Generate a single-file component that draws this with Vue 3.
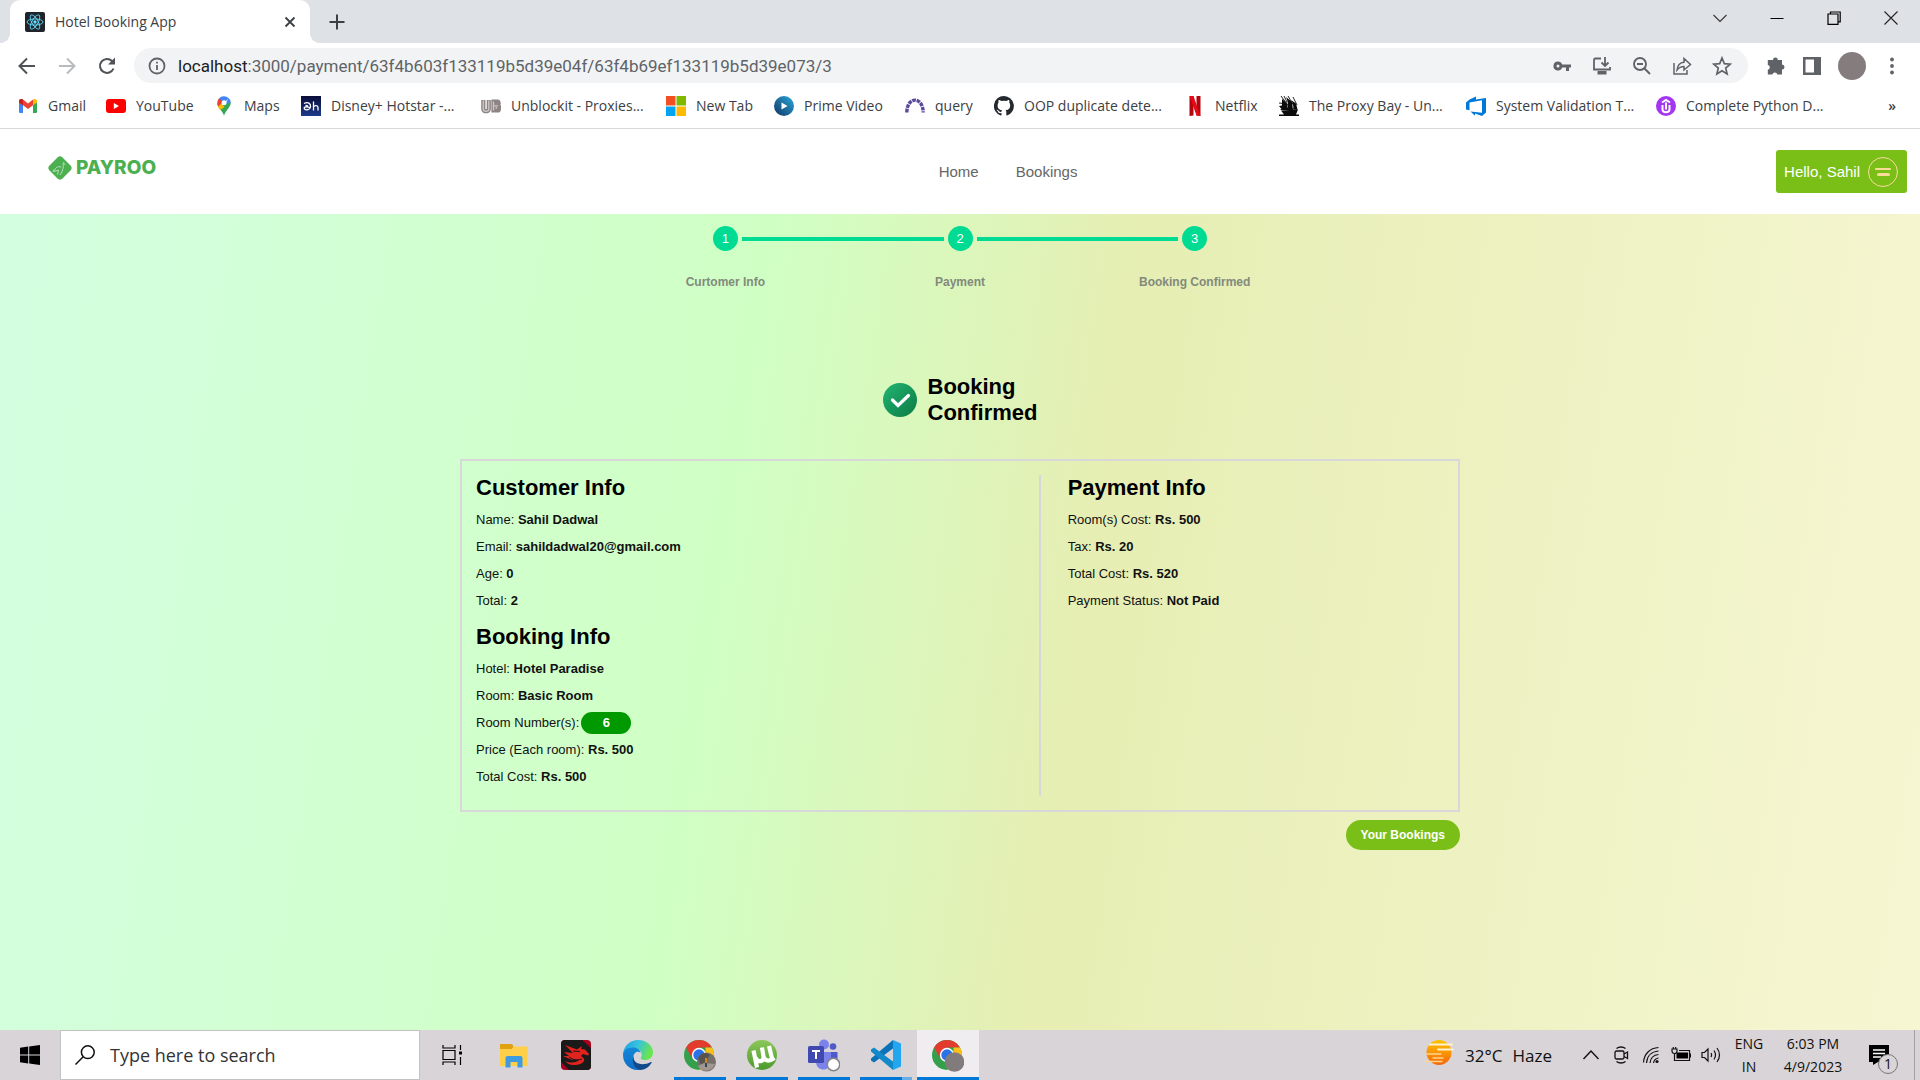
<script setup>
const bookmarks = [
  { icon: 'gmail', label: 'Gmail' },
  { icon: 'youtube', label: 'YouTube' },
  { icon: 'maps', label: 'Maps' },
  { icon: 'hotstar', label: 'Disney+ Hotstar -...' },
  { icon: 'unblockit', label: 'Unblockit - Proxies...' },
  { icon: 'microsoft', label: 'New Tab' },
  { icon: 'prime', label: 'Prime Video' },
  { icon: 'query', label: 'query' },
  { icon: 'github', label: 'OOP duplicate dete...' },
  { icon: 'netflix', label: 'Netflix' },
  { icon: 'ship', label: 'The Proxy Bay - Un...' },
  { icon: 'azure', label: 'System Validation T...' },
  { icon: 'udemy', label: 'Complete Python D...' },
]

const steps = ['Curtomer Info', 'Payment', 'Booking Confirmed']

const customer = [
  { label: 'Name', value: 'Sahil Dadwal' },
  { label: 'Email', value: 'sahildadwal20@gmail.com' },
  { label: 'Age', value: '0' },
  { label: 'Total', value: '2' },
]

const booking = [
  { label: 'Hotel', value: 'Hotel Paradise' },
  { label: 'Room', value: 'Basic Room' },
  { label: 'Room Number(s)', value: '6', pill: true },
  { label: 'Price (Each room)', value: 'Rs. 500' },
  { label: 'Total Cost', value: 'Rs. 500' },
]

const payment = [
  { label: 'Room(s) Cost', value: 'Rs. 500' },
  { label: 'Tax', value: 'Rs. 20' },
  { label: 'Total Cost', value: 'Rs. 520' },
  { label: 'Payment Status', value: 'Not Paid' },
]
</script>

<template>
  <div class="screen">
    <header class="browser">
      <div class="tabs">
        <div class="tab">
          <svg class="favicon" viewBox="0 0 20 20" width="20" height="20">
            <rect width="20" height="20" rx="2" fill="#20232a" />
            <g fill="none" stroke="#61dafb" stroke-width="0.9">
              <ellipse cx="10" cy="10" rx="8" ry="3.1" />
              <ellipse cx="10" cy="10" rx="8" ry="3.1" transform="rotate(60 10 10)" />
              <ellipse cx="10" cy="10" rx="8" ry="3.1" transform="rotate(120 10 10)" />
            </g>
            <circle cx="10" cy="10" r="1.7" fill="#61dafb" />
          </svg>
          <span class="tab-title">Hotel Booking App</span>
          <button class="plain" aria-label="Close tab">
            <svg viewBox="0 0 12 12" width="12" height="12" stroke="#3c4043" stroke-width="1.8"><path d="M1.5 1.5l9 9M10.5 1.5l-9 9" /></svg>
          </button>
        </div>
        <button class="plain new-tab" aria-label="New tab">
          <svg viewBox="0 0 16 16" width="16" height="16" stroke="#3c4043" stroke-width="2"><path d="M8 0.5v15M0.5 8h15" /></svg>
        </button>
        <div class="window-controls">
          <button class="plain" aria-label="Search tabs"><svg viewBox="0 0 14 14" width="14" height="14" fill="none" stroke="#333" stroke-width="1.1"><path d="M0.5 4L7 10.5L13.500 4" /></svg></button>
          <button class="plain" aria-label="Minimize"><svg viewBox="0 0 14 14" width="14" height="14" stroke="#000"><path d="M0.5 7.500h13" /></svg></button>
          <button class="plain" aria-label="Restore"><svg viewBox="0 0 14 14" width="14" height="14" fill="none" stroke="#000" stroke-width="1.2"><path d="M1 3h10v10.300h-10zM3.500 3V1h9.700v9.800h-2" /></svg></button>
          <button class="plain" aria-label="Close"><svg viewBox="0 0 14 14" width="14" height="14" stroke="#222" stroke-width="1.1"><path d="M0.5 0.5l13 13M13.500 0.5l-13 13" /></svg></button>
        </div>
      </div>

      <div class="toolbar">
        <div class="history">
          <button class="plain" aria-label="Back"><svg viewBox="0 0 18 18" width="18" height="18" fill="none" stroke="#4f5357" stroke-width="2"><path d="M17 9H2M9 1.500L1.500 9L9 16.500" /></svg></button>
          <button class="plain" aria-label="Forward"><svg viewBox="0 0 18 18" width="18" height="18" fill="none" stroke="#b9bbbe" stroke-width="2"><path d="M1 9h15M9 1.500L16.500 9L9 16.500" /></svg></button>
          <button class="plain" aria-label="Reload"><svg viewBox="0 0 18 18" width="18" height="18" fill="none" stroke="#4f5357" stroke-width="2"><path d="M15.500 11.500A7 7 0 1 1 14 4L16 6" /><path d="M17 0.500v7h-7z" fill="#4f5357" stroke="none" /></svg></button>
        </div>
        <div class="omnibox">
          <svg viewBox="0 0 18 18" width="18" height="18" fill="none" stroke="#5f6368" stroke-width="1.800"><circle cx="9" cy="9" r="7.500" /><path d="M9 8v5M9 4.800v1.800" /></svg>
          <div class="url" role="textbox" aria-label="Address"><span class="host">localhost</span>:3000/payment/63f4b603f133119b5d39e04f/63f4b69ef133119b5d39e073/3</div>
          <div class="omni-actions">
            <button class="plain" aria-label="Passwords"><svg viewBox="0 0 20 20" width="20" height="20" fill="#5f6368"><path fill-rule="evenodd" d="M6 5.500a4.500 4.500 0 1 0 4.200 6H14V15h3v-3.500h2v-3h-8.800A4.500 4.500 0 0 0 6 5.500zm0 3a1.500 1.500 0 1 1 0 3a1.500 1.500 0 0 1 0-3z" /></svg></button>
            <button class="plain" aria-label="Install app"><svg viewBox="0 0 20 20" width="20" height="20" fill="none" stroke="#5f6368" stroke-width="1.800"><path d="M9 2.500H3.500a1.500 1.500 0 0 0-1.500 1.500v9.500h16V11M13 1v8.500M9.500 6.500L13 10l3.500-3.500" /><path d="M5.500 15h9v3.500h-9z" fill="#5f6368" stroke="none" /></svg></button>
            <button class="plain" aria-label="Zoom"><svg viewBox="0 0 20 20" width="20" height="20" fill="none" stroke="#5f6368" stroke-width="1.900"><circle cx="8" cy="8" r="6" /><path d="M12.500 12.500l5.500 5.500M5 8h6" /></svg></button>
            <button class="plain" aria-label="Share"><svg viewBox="0 0 20 20" width="20" height="20" fill="none" stroke="#5f6368" stroke-width="1.500"><path d="M2 7v11h13v-4M5 14c.500-5 3-7.500 7-7.800V2.500L18.500 8.500L12 14v-3.500c-3 0-5 1-7 3.500z" /></svg></button>
            <button class="plain" aria-label="Bookmark this page"><svg viewBox="0 0 20 20" width="20" height="20" fill="none" stroke="#5f6368" stroke-width="1.700"><path d="M10 2l2.300 5.600l6 .5l-4.600 3.900l1.400 5.900L10 14.700l-5.100 3.200l1.400-5.900L1.700 8.100l6-.5z" /></svg></button>
          </div>
        </div>
        <div class="extras">
          <button class="plain" aria-label="Extensions"><svg viewBox="0 0 20 20" width="20" height="20" fill="#5f6368"><path d="M7 4a2.400 2.400 0 0 1 4.800 0H16v4.600a2.500 2.500 0 0 1 0 5V18.500h-4.700a2.500 2.500 0 0 0-4.900 0H1.800v-4.700a2.500 2.500 0 0 0 0-4.900V4z" /></svg></button>
          <button class="plain" aria-label="Side panel"><svg viewBox="0 0 20 20" width="20" height="20"><path fill="#5f6368" fill-rule="evenodd" d="M1 1h18v18H1zM3.500 3.500v13H12v-13z" /></svg></button>
          <button class="plain avatar" aria-label="Profile"></button>
          <button class="plain" aria-label="Menu"><svg viewBox="0 0 20 20" width="20" height="20" fill="#5f6368"><circle cx="10" cy="3.500" r="1.900" /><circle cx="10" cy="10" r="1.900" /><circle cx="10" cy="16.500" r="1.900" /></svg></button>
        </div>
      </div>

      <nav class="bookmarks" aria-label="Bookmarks">
        <a v-for="b in bookmarks" :key="b.label" href="#" class="bookmark">
          <svg viewBox="0 0 20 20" width="20" height="20">
            <g v-if="b.icon === 'gmail'">
              <path fill="#4285f4" d="M1 5h4v12H2.300A1.300 1.300 0 0 1 1 15.700z" />
              <path fill="#34a853" d="M15 5h4v10.700a1.300 1.300 0 0 1-1.300 1.300H15z" />
              <path fill="#ea4335" d="M1 5.500C1 3 3.500 2.500 5 3.600L10 7.400L15 3.600V9.200L10 13L5 9.200L1 7z" />
              <path fill="#c5221f" d="M1 5.500C1 3 3.500 2.500 5 3.600V9.200L1 6.500z" />
              <path fill="#fbbc04" d="M19 5.500C19 3 16.500 2.500 15 3.600V9.200L19 6.500z" />
            </g>
            <g v-else-if="b.icon === 'youtube'">
              <rect x="0" y="3" width="20" height="14" rx="3" fill="#f00" /><path fill="#fff" d="M7.800 7v6l5.200-3z" />
            </g>
            <g v-else-if="b.icon === 'maps'">
              <path fill="#34a853" d="M10 20C9.300 15.500 3.500 12 3.200 7L16.800 6.500C17 11 11 15 10 20z" />
              <path fill="#fbbc04" d="M3.200 7l4.500 1l3 3l-4.700 3C4.500 12 3.200 9.500 3.200 7z" />
              <path fill="#4285f4" d="M5 2.500A6.800 6.800 0 0 1 14.500 2L9 9z" />
              <path fill="#ea4335" d="M5 2.300L9 6L4.200 10.500C2.800 8 3 4.800 5 2.300z" />
              <path fill="#4285f4" d="M14.500 1.800a6.800 6.800 0 0 1 2.300 5L11.500 8z" />
              <circle cx="10" cy="6.800" r="2.500" fill="#fff" />
            </g>
            <g v-else-if="b.icon === 'hotstar'">
              <defs><linearGradient id="hs" x2="0" y2="1"><stop stop-color="#0a0c38" /><stop offset="1" stop-color="#1c3c8c" /></linearGradient></defs>
              <rect width="20" height="20" fill="url(#hs)" />
              <path fill="none" stroke="#fff" stroke-width="1.300" d="M3 7.500c4-2 7 0 6.500 3.500c-.500 3-4.500 3.500-6 2c-1-1.500.500-3 5.500-1.500M4.500 9.500l2.500.5M12.500 5.500v9M12.500 11c1-2 4.500-2 4.500.5v3" />
            </g>
            <g v-else-if="b.icon === 'unblockit'" fill="none" stroke="#8d8585" stroke-width="4.200">
              <path d="M2.300 4V13c0 3 5.500 3 5.500 0V4" /><path d="M12.500 5.500h4c1.500 0 1.500 4 0 4h-4h4c2 0 2 5 0 5h-4z" />
              <path stroke="#cfc8c5" stroke-width="1.300" d="M2.300 4.500V13c0 3 5.500 3 5.500 0V4.500M12.500 5.500v9M12.500 9.800h4.500" />
            </g>
            <g v-else-if="b.icon === 'microsoft'">
              <path fill="#f25022" d="M0 0h9.500v9.500H0z" /><path fill="#7fba00" d="M10.500 0H20v9.500h-9.500z" />
              <path fill="#00a4ef" d="M0 10.500h9.500V20H0z" /><path fill="#ffb900" d="M10.500 10.500H20V20h-9.500z" />
            </g>
            <g v-else-if="b.icon === 'prime'">
              <defs><linearGradient id="pv" x1="0" y1="1" x2="1" y2="0"><stop stop-color="#103463" /><stop offset="1" stop-color="#2aa9dc" /></linearGradient></defs>
              <circle cx="10" cy="10" r="10" fill="url(#pv)" /><path fill="#fff" d="M7.500 6.500v7l6-3.500z" />
            </g>
            <path v-else-if="b.icon === 'query'" d="M1.800 16.500C2 0 18 0 18.200 16.500" fill="none" stroke="#5b4a9c" stroke-width="3.400" stroke-dasharray="3.700 .8" />
            <path v-else-if="b.icon === 'github'" fill="#24292f" d="M10 0a10 10 0 0 0-3.200 19.500c.5.100.7-.2.700-.5v-1.900c-2.800.6-3.400-1.200-3.400-1.200c-.4-1.200-1.100-1.500-1.100-1.500c-.9-.6.100-.6.100-.6c1 .1 1.500 1 1.500 1c.9 1.500 2.400 1.100 2.900.8c.1-.6.400-1.100.6-1.300c-2.200-.3-4.500-1.100-4.500-5c0-1.100.4-2 1-2.700c-.1-.2-.4-1.200.1-2.600c0 0 .8-.3 2.700 1a9.400 9.400 0 0 1 5 0c1.900-1.300 2.700-1 2.700-1c.5 1.400.2 2.400.1 2.600c.6.700 1 1.600 1 2.700c0 3.900-2.300 4.700-4.600 5c.4.300.7.900.7 1.900V19c0 .3.200.6.700.5A10 10 0 0 0 10 0z" />
            <g v-else-if="b.icon === 'netflix'">
              <path fill="#b1060f" d="M4.500 0h4v19.500l-4 .5zM11.500 0h4v20l-4-.5z" /><path fill="#e50914" d="M4.500 0h4l7 20l-4-.5z" />
            </g>
            <g v-else-if="b.icon === 'ship'" fill="#0c0c0c">
              <path d="M2 14.500l17-1l-2 5H5zM0 18.500h20V20H0zM3 3l5 4l1 7l-8 0l1.500-1L0 10l3-.500zM7 1l6 5l1 8H8.500c1-4 .5-9-1.500-13zM12 4l5 3.500l1.500 6h-4.500C15 10 14 7 12 4z" /><path d="M2 0l9 12M9 0l6 10M0 7l8 1M14 1l4 8M5 0l3 6" stroke="#111" stroke-width=".9" />
            </g>
            <path v-else-if="b.icon === 'azure'" fill="#0078d7" d="M0 6.500L3.500 3.500L10 .5v3L20 2v14.500l-4 3.500l-7-2.500v2.300L4.500 15.500L16 16.800V4.200L3.500 6.500v7.800L0 13.500z" />
            <g v-else>
              <circle cx="10" cy="10" r="10" fill="#a435f0" /><path fill="none" stroke="#fff" stroke-width="2" d="M6 6.500L10 4l4 2.500M6.500 9v4.500c0 3.500 7 3.500 7 0V9M10 6.500v7" />
            </g>
          </svg>
          <span>{{ b.label }}</span>
        </a>
        <button class="plain overflow" aria-label="More bookmarks">»</button>
      </nav>
    </header>

    <nav class="site-nav" aria-label="Site">
      <a class="brand" href="#">
        <svg viewBox="0 0 24 24" width="24" height="24">
          <path fill="#4caf50" d="M9.500 1.500Q12 -.8 14.500 1.500L22.500 9.500Q24.800 12 22.500 14.500L14.500 22.500Q12 24.800 9.500 22.500L1.500 14.500Q-.8 12 1.500 9.500z" />
          <path fill="none" stroke="#b5dfb7" stroke-width="1" d="M16 6l-1 2.500c1.500 3-1 4.500-1 7.500l-2 3M13.500 11c-4-1-7 1-7 4.500l4-1.500l-1 4.500M6 13.500l-1 2.500M15 7.500l2.500 1" />
        </svg>
        <span>PAYROO</span>
      </a>
      <div class="links">
        <a href="#">Home</a>
        <a href="#">Bookings</a>
      </div>
      <button class="account">
        <span>Hello, Sahil</span>
        <svg viewBox="0 0 32 32" width="32" height="32" fill="none" stroke="#f9dc98" stroke-linecap="round">
          <circle cx="16" cy="16" r="14.500" /><path stroke-width="2" d="M9 13h14" /><path stroke-width="3" d="M11.500 18.500h10" />
        </svg>
      </button>
    </nav>

    <main>
      <ol class="steps">
        <li v-for="(s, i) in steps" :key="s">
          <i class="line"></i>
          <span class="dot">{{ i + 1 }}</span>
          <i class="line"></i>
          <span class="step-label">{{ s }}</span>
        </li>
      </ol>

      <div class="confirmed">
        <svg viewBox="0 0 34 34" width="34" height="34">
          <defs><linearGradient id="ok" x2="1" y2="1"><stop stop-color="#22b573" /><stop offset="1" stop-color="#0b7a43" /></linearGradient></defs>
          <circle cx="17" cy="17" r="17" fill="url(#ok)" />
          <path fill="none" stroke="#fff" stroke-width="3.200" d="M9.500 17l5.500 5.500L25.500 12.500" stroke-linecap="round" />
        </svg>
        <h1>Booking<br />Confirmed</h1>
      </div>

      <div class="summary">
        <section class="details">
          <div class="column">
            <h2>Customer Info</h2>
            <p v-for="r in customer" :key="r.label">{{ r.label }}: <b>{{ r.value }}</b></p>
            <h2>Booking Info</h2>
            <p v-for="r in booking" :key="r.label">{{ r.label }}:<b v-if="r.pill" class="pill">{{ r.value }}</b><template v-else>{{ ' ' }}<b>{{ r.value }}</b></template></p>
          </div>
          <div class="column">
            <h2>Payment Info</h2>
            <p v-for="r in payment" :key="r.label">{{ r.label }}: <b>{{ r.value }}</b></p>
          </div>
        </section>
        <button class="your-bookings">Your Bookings</button>
      </div>
    </main>

    <footer class="taskbar">
      <button class="plain start" aria-label="Start"><svg viewBox="0 0 20 20" width="20" height="20"><path d="M0 2.800L8.200 1.600V9.500H0zM9.200 1.500L20 0v9.500H9.200zM0 10.500h8.200v7.900L0 17.200zM9.200 10.500H20V20L9.200 18.500z" /></svg></button>
      <label class="search">
        <svg viewBox="0 0 20 20" width="20" height="20" fill="none" stroke="#111" stroke-width="1.500"><circle cx="12.800" cy="7.200" r="6.400" /><path d="M8.200 11.800L0.500 19.500" /></svg>
        <input type="text" placeholder="Type here to search" aria-label="Search" />
      </label>
      <div class="apps">
        <button class="plain app" aria-label="Task view"><svg viewBox="0 0 20 20" width="20" height="20" fill="none" stroke="#000" stroke-width="1.200"><path d="M1 0v3h12V0M1 20v-3h12v3M1 5.500h12v9H1zM18.500 0v5M18.500 12v8" /><path d="M17 6.500h3v3h-3z" fill="#000" stroke="none" /></svg></button>
        <button class="plain app" aria-label="File Explorer"><svg viewBox="0 0 30 30" width="30" height="30"><path fill="#e0a00f" d="M1 4h12l1.500 2.500L13 9H1z" /><path fill="#ffcf4a" d="M1 9h12l2-2.500h13.500V26H1z" /><path fill="#3e9be0" d="M8.500 16h13q2 0 2 2v9.500h-5V22h-7v5.500h-5V18q0-2 2-2z" /></svg></button>
        <button class="plain app" aria-label="Dragon Center"><svg viewBox="0 0 30 30" width="30" height="30"><rect width="30" height="30" rx="4" fill="#a8001e" /><path fill="#1b1a1b" d="M4 0h17l9 8v18q0 4-4 4H8L0 22V4Q0 0 4 0z" /><path fill="#e0231c" d="M4 5l12 4.500l5-3.500l-1 3l4 .5l4 4.500l-1 1.500l-5-1.500l-2 2l3 2.500c1 3-2 6-9 6.500c-5 .3-8-1.500-10-4c5 2.500 12 2 14.500-1.500c-4 1-9 .5-12-1.500L2 16h6l-5-4l9 1z" /><path stroke="#1b1a1b" d="M8 17c4 3 8 3.500 13 2M12 11l7 .5" fill="none" /></svg></button>
        <button class="plain app" aria-label="Edge"><svg viewBox="0 0 30 30" width="30" height="30"><defs><linearGradient id="eg" x1="0" y1="0" x2="1" y2=".3"><stop stop-color="#1b9de2" /><stop offset=".5" stop-color="#35c1e0" /><stop offset="1" stop-color="#6ae550" /></linearGradient><linearGradient id="eb" x1="0" y1="0" x2="0" y2="1"><stop stop-color="#1488d8" /><stop offset="1" stop-color="#0f6cc4" /></linearGradient></defs><path fill="url(#eg)" d="M0 14C1 5 8 0 15 0c9 0 15 6 15 12.500c0 5-4 7.500-8 7.500c-3 0-5-1-4-2.500c2-3 0-8-6-8.500C6 8.500 1 12 0 14z" /><path fill="url(#eb)" d="M0 15c0-5 5-8 11-7.500c4 .5 6 3 6.500 5C13 10 10 14 10.500 18c.5 6 5 9 8 11.500C8 32 0 24 0 15z" /><path fill="#114a8b" d="M10.500 16c-1 7 8 11 17.500 6c.8-.3 1 .2.600.8C26 27 22 30 17 30c-6-2-8.500-8-6.500-14z" /></svg></button>
        <button class="plain app running" aria-label="Chrome"><svg viewBox="0 0 32 34" width="32" height="34"><circle cx="15" cy="17" r="15" fill="#34a04c" /><path fill="#e33b2e" d="M2 9.500A15 15 0 0 1 28 9.500H15L8.500 20.800z" /><path fill="#fcc018" d="M28 9.500A15 15 0 0 1 15 32l6.500-11.300L21.500 9.500z" /><circle cx="15" cy="17" r="7.200" fill="#fff" /><circle cx="15" cy="17" r="5.700" fill="#2a72e8" /><circle cx="22.500" cy="24" r="9.500" fill="#77706a" /><path fill="#57534f" d="M14 20c3-6 9-6 12-3l-3 4l-5 8z" /><path fill="#a09890" d="M14 28l6-3l11 1c-3 8-13 9-17 2z" /><path stroke="#c98a20" stroke-width="2" d="M22 20v5" /><path stroke="#2c4562" stroke-width="2" d="M22 25v4" /></svg></button>
        <button class="plain app running" aria-label="uTorrent"><svg viewBox="0 0 30 30" width="30" height="30"><defs><linearGradient id="ut" x2="0" y2="1"><stop stop-color="#8cc75a" /><stop offset="1" stop-color="#4b9a2b" /></linearGradient></defs><circle cx="15" cy="15" r="15" fill="url(#ut)" /><path fill="none" stroke="#fff" stroke-width="4.200" d="M6.500 10.500l3.500 17M8.500 17.500c2 5.500 8.500 4.500 8-1L15 7.500M17 17.500c2 4.500 6 3.500 10.500.500M25 18.500L22 6" /></svg></button>
        <button class="plain app running" aria-label="Teams"><svg viewBox="0 0 32 34" width="32" height="34"><circle cx="16" cy="6.500" r="5" fill="#7b83eb" /><circle cx="25" cy="8.500" r="3.300" fill="#5059c9" /><path fill="#5059c9" d="M20 14h9.500v9c0 4-3 6-6 6z" /><path fill="#7b83eb" d="M8 14h15v10c0 5-4 7.500-7.500 7.500S8 29 8 24z" /><rect x="0" y="8" width="16" height="17" rx="1.500" fill="#4049b0" /><path stroke="#fff" stroke-width="2" d="M4 13h8M8 12v9" /><circle cx="25.500" cy="26.500" r="6.200" fill="#fff" stroke="#858585" stroke-width="1.500" /></svg></button>
        <button class="plain app running multi" aria-label="Visual Studio Code"><svg viewBox="0 0 30 30" width="30" height="30"><path fill="#0a73b8" d="M22 0v8.500L3 22.500L0 20.500v-2z" /><path fill="#128ac9" d="M22 30v-8.500L3 7.500L0 9.500v2z" /><path fill="#23a6f0" d="M22 0l8 3.500v23L22 30z" /></svg></button>
        <button class="plain app running active" aria-label="Chrome, active"><svg viewBox="0 0 32 34" width="32" height="34"><circle cx="15" cy="17" r="15" fill="#34a04c" /><path fill="#e33b2e" d="M2 9.500A15 15 0 0 1 28 9.500H15L8.500 20.800z" /><path fill="#fcc018" d="M28 9.500A15 15 0 0 1 15 32l6.500-11.300L21.500 9.500z" /><circle cx="15" cy="17" r="7.200" fill="#fff" /><circle cx="15" cy="17" r="5.700" fill="#2a72e8" /><circle cx="22.500" cy="24" r="9.800" fill="#827b7b" /></svg></button>
      </div>
      <div class="tray">
        <button class="plain weather">
          <svg viewBox="0 0 30 30" width="30" height="30"><defs><linearGradient id="sun" x2="0" y2="1"><stop stop-color="#ffc400" /><stop offset="1" stop-color="#f4660c" /></linearGradient></defs><circle cx="14" cy="12.500" r="12.500" fill="url(#sun)" /><path stroke="#fff3d0" stroke-width="2" stroke-linecap="round" d="M5 4.500h22M13 9.500h15" /><path stroke="#ffd58a" stroke-width="1.500" stroke-linecap="round" d="M2 14h14M8 18h10M0 21.500h17" /></svg>
          <span>32°C</span><span>Haze</span>
        </button>
        <button class="plain cell" aria-label="Hidden icons"><svg viewBox="0 0 18 18" width="18" height="18" fill="none" stroke="#111" stroke-width="1.400"><path d="M1.500 13L9 5l7.500 8" /></svg></button>
        <button class="plain cell" aria-label="Meet now"><svg viewBox="0 0 18 18" width="18" height="18" fill="none" stroke="#111" stroke-width="1.300"><rect x="3" y="5" width="9" height="8" rx="1.500" /><path d="M12 8l3.500-2v6.500L12 10.500M4.500 2.500c2.500-2 6.500-2 9 0M4.500 15.500c2.500 2 6.500 2 9 0" /></svg></button>
        <button class="plain cell" aria-label="Network"><svg viewBox="0 0 18 18" width="18" height="18" fill="none" stroke="#111" stroke-width="1.200"><path d="M1.500 16.500C2 8 8 2 16.500 1.500M4.500 17C5 10 9.500 5.500 16.500 5M8 17c.500-4.500 3.500-8 8.500-8.500M11.500 17c.3-2.500 2-4.500 5-5" /><circle cx="15" cy="15.500" r="1.600" fill="#111" stroke="none" /></svg></button>
        <button class="plain cell" aria-label="Battery"><svg viewBox="0 0 20 18" width="20" height="18" fill="none" stroke="#111" stroke-width="1.200"><path fill="#000" d="M5.500 6.500h11.500v6H5.500z" stroke="none" /><path d="M8 4.500h10.500v10H3.500V10M19.500 7.500v4M1 3h5v2q0 2.500-2.500 2.500T1 5zM2.300 1v2M4.700 1v2M3.500 7.500v3" /></svg></button>
        <button class="plain cell" aria-label="Volume"><svg viewBox="0 0 20 18" width="20" height="18" fill="none" stroke="#111" stroke-width="1.200"><path d="M1 6.500h2.500L7 3v12l-3.500-3.500H1zM10 7q1.200 2 0 4M13 4.500q3 4.500 0 9M16 2q5 7 0 14" /></svg></button>
        <button class="plain lang"><span>ENG</span><span>IN</span></button>
        <button class="plain clock"><span>6:03 PM</span><span>4/9/2023</span></button>
        <button class="plain notices" aria-label="Notifications">
          <svg viewBox="0 0 20 20" width="20" height="20"><path d="M0 0h20v17H9l-5 3v-3H0z" /><path stroke="#fff" stroke-width="1.300" d="M4 5h12M4 8.500h12M4 12h8" /></svg>
          <span class="badge">1</span>
        </button>
        <span class="peek"></span>
      </div>
    </footer>
  </div>
</template>

<style>
body {
  margin: 0;
}
</style>

<style scoped>
.screen {
  display: flex;
  flex-direction: column;
  min-height: 100vh;
  font-family: "Liberation Sans", Arial, sans-serif;
}
.browser,
.taskbar {
  font-family: "Open Sans", "Noto Sans", sans-serif;
}
svg {
  display: block;
  flex: none;
}
button {
  font: inherit;
  cursor: pointer;
}
.plain {
  display: flex;
  align-items: center;
  justify-content: center;
  padding: 0;
  border: 0;
  background: none;
  color: inherit;
}
a {
  color: inherit;
  text-decoration: none;
}

/* browser frame */
.tabs {
  display: flex;
  align-items: center;
  height: 43px;
  padding-left: 10px;
  background: #dee1e6;
}
.tab {
  position: relative;
  display: flex;
  align-items: center;
  box-sizing: border-box;
  width: 300px;
  height: 43px;
  padding: 0 14px 0 15px;
  border-radius: 10px 10px 0 0;
  background: #fff;
}
.tab::before,
.tab::after {
  content: "";
  position: absolute;
  bottom: 0;
  left: -10px;
  width: 10px;
  height: 10px;
  background: radial-gradient(circle at 0 0, transparent 10px, #fff 10px);
}
.tab::after {
  left: 100%;
  background: radial-gradient(circle at 100% 0, transparent 10px, #fff 10px);
}
.tab-title {
  flex: 1;
  margin-left: 10px;
  font-size: 14px;
  line-height: 20px;
  color: #3c4043;
}
.new-tab {
  margin-left: 19px;
}
.window-controls {
  display: flex;
  align-self: flex-start;
  height: 36px;
  margin-left: auto;
  padding-right: 1px;
}
.window-controls .plain {
  width: 57px;
}
.toolbar {
  display: flex;
  align-items: center;
  height: 45px;
  background: #fff;
}
.history {
  display: flex;
  gap: 22px;
  padding: 0 18px;
}
.omnibox {
  display: flex;
  flex: 1;
  align-items: center;
  height: 35px;
  padding: 0 16px 0 14px;
  border-radius: 18px;
  background: #f1f3f4;
}
.url {
  flex: 1;
  margin-left: 12px;
  font-family: Roboto, sans-serif;
  font-size: 17px;
  line-height: 24px;
  color: #5f6368;
}
.host {
  color: #202124;
}
.omni-actions {
  display: flex;
  gap: 20px;
}
.extras {
  display: flex;
  align-items: center;
  gap: 16px;
  padding: 0 18px;
}
.avatar {
  width: 28px;
  height: 28px;
  border-radius: 50%;
  background: #857d7d;
}
.bookmarks {
  display: grid;
  grid-template-columns: 88px 108px 87px 180px 185px 108px 131px 89px 191px 94px 187px 190px auto 1fr;
  align-items: center;
  height: 36px;
  padding: 0 24px 4px 18px;
  border-bottom: 1px solid #d5d7da;
  background: #fff;
  font-size: 14px;
  line-height: 20px;
  color: #3c4043;
}
.bookmark {
  display: flex;
  align-items: center;
  gap: 10px;
  white-space: nowrap;
}
.overflow {
  justify-self: end;
  font-weight: 600;
}

/* site header */
.site-nav {
  display: flex;
  align-items: center;
  justify-content: space-between;
  height: 85px;
  padding: 0 13px 0 48px;
  background: #fff;
  font-size: 15px;
}
.brand {
  display: flex;
  align-items: center;
  gap: 4px;
  width: 192px;
  margin-bottom: 8px;
  font: 800 19px/24px Inter, sans-serif;
  color: #4caf50;
}
.links {
  display: flex;
  gap: 37px;
  color: #666;
}
.account {
  display: flex;
  align-items: center;
  gap: 7px;
  height: 43px;
  padding: 0 8px;
  border: 0;
  border-radius: 3px;
  background: #7abf18;
  color: #fff;
}

/* booking page */
main {
  flex: 1;
  box-sizing: border-box;
  padding: 12px 24px 24px;
  background: linear-gradient(98.5deg, #d3ffe1 0%, #d0ffc4 38%, #e6eeb3 56%, #f7f6d3 100%);
  color: #111;
}
.steps {
  display: flex;
  max-width: 704px;
  margin: 0 auto;
  padding: 0;
  list-style: none;
}
.steps li {
  display: grid;
  flex: 1;
  grid-template-columns: 1fr 25px 1fr;
  column-gap: 4px;
  row-gap: 21px;
  align-items: center;
}
.line {
  height: 4px;
  background: #00db94;
}
.steps li:first-child .line:first-child,
.steps li:last-child .dot + .line {
  visibility: hidden;
}
.dot {
  height: 25px;
  border-radius: 50%;
  background: #00db94;
  color: #fff;
  font-size: 13px;
  line-height: 25px;
  text-align: center;
}
.step-label {
  grid-column: 1 / -1;
  font-size: 12px;
  font-weight: 700;
  line-height: 20px;
  text-align: center;
  color: #828a7c;
}
.confirmed {
  display: flex;
  align-items: center;
  justify-content: center;
  gap: 11px;
  margin: 82px 0 33px;
}
h1,
h2 {
  margin: 0;
  font-size: 22px;
  line-height: 26px;
  color: #000;
}
.summary {
  display: flex;
  flex-direction: column;
  max-width: 1000px;
  margin: 0 auto;
}
.details {
  display: grid;
  grid-template-columns: 7fr 5fr;
  padding: 14px;
  border: 2px solid #d8d8da;
}
.column {
  padding-bottom: 6px;
}
.column:first-child {
  border-right: 2px solid #d8d8da;
}
.column + .column {
  padding-left: 27px;
}
h2 {
  margin-bottom: 5px;
}
p + h2 {
  margin-top: 10px;
}
p {
  margin: 0;
  font-size: 13px;
  line-height: 27px;
}
.pill {
  display: inline-block;
  width: 50px;
  margin-left: 2px;
  border-radius: 11px;
  background: #090;
  color: #fff;
  line-height: 22px;
  text-align: center;
}
.your-bookings {
  align-self: flex-end;
  height: 30px;
  margin-top: 8px;
  padding: 0 15px;
  border: 0;
  border-radius: 15px;
  background: #7abf18;
  color: #fff;
  font-size: 12px;
  font-weight: 700;
}

/* taskbar */
.taskbar {
  display: flex;
  height: 50px;
  background: #d8d4d7;
  color: #111;
}
.start {
  width: 60px;
}
.search {
  display: flex;
  align-items: center;
  gap: 15px;
  box-sizing: border-box;
  width: 360px;
  padding: 0 14px;
  border: 1px solid #c3c1c3;
  background: #fff;
}
.search input {
  flex: 1;
  min-width: 0;
  padding: 0;
  border: 0;
  outline: 0;
  background: none;
  font: inherit;
  font-size: 18px;
}
.search input::placeholder {
  color: #333;
  opacity: 1;
}
.apps {
  display: flex;
  padding-left: 1px;
}
.app {
  position: relative;
  width: 62px;
}
.running::after {
  content: "";
  position: absolute;
  right: 5px;
  bottom: 0;
  left: 5px;
  height: 3px;
  background: #0078d7;
}
.multi::after {
  background: linear-gradient(90deg, #0078d7 80%, #66aee8 80%);
}
.active {
  background: #efedef;
}
.active::after {
  right: 0;
  left: 0;
}
.tray {
  display: flex;
  margin-left: auto;
}
.weather {
  justify-content: flex-start;
  gap: 10px;
  width: 151px;
  font-size: 17px;
}
.cell {
  width: 30px;
}
.lang,
.clock {
  flex-direction: column;
  width: 46px;
  font-size: 14px;
  line-height: 23px;
}
.clock {
  width: 82px;
}
.notices {
  position: relative;
  width: 60px;
  padding-right: 10px;
}
.badge {
  position: absolute;
  right: 16px;
  bottom: 6px;
  width: 18px;
  height: 18px;
  border: 1px solid #777;
  border-radius: 50%;
  background: #d8d4d7;
  font-size: 14px;
  line-height: 18px;
  text-align: center;
}
.peek {
  width: 5px;
  border-left: 1px solid #a5a3a5;
}
</style>
